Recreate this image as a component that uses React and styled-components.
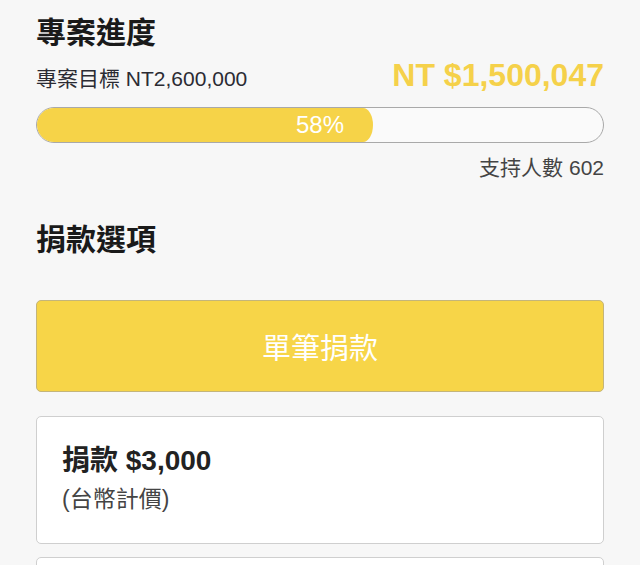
import React from 'react';
import styled, { createGlobalStyle } from 'styled-components';

const GlobalStyle = createGlobalStyle`
    html, body {
        margin: 0;
        padding: 0;
        background: #f7f7f7;
    }
    body {
        font-family: "Liberation Sans", "Noto Sans CJK TC", sans-serif;
        color: #222;
    }
`;

const Page = styled.div`
    padding: 9px 36px 0;
    display: flex;
    flex-direction: column;
`;

const SectionTitle = styled.h2`
    margin: 0;
    font-family: "Noto Sans CJK TC", sans-serif;
    font-size: 30px;
    font-weight: 700;
    line-height: 42px;
    color: #1a1a1a;
`;

const GoalRow = styled.div`
    display: flex;
    justify-content: space-between;
    align-items: baseline;
    margin-top: 6px;
`;

const Goal = styled.span`
    font-size: 21px;
    color: #2b2b33;
    line-height: 28px;
`;

const Raised = styled.span`
    font-size: 32px;
    font-weight: 700;
    color: #f5d14a;
    line-height: 36px;
`;

const Bar = styled.div`
    position: relative;
    margin-top: 14px;
    height: 34px;
    border: 1px solid #a9a9a9;
    border-radius: 18px;
    background: #fafafa;
    overflow: hidden;
`;

const Fill = styled.div`
    height: 100%;
    background: #f6d348;
    border-radius: 0 10px 10px 0 / 0 50% 50% 0;
`;

const Percent = styled.span`
    position: absolute;
    inset: 0;
    display: flex;
    align-items: center;
    justify-content: center;
    color: #fff;
    font-size: 24px;
`;

const Backers = styled.div`
    margin-top: 11px;
    text-align: right;
    font-size: 21px;
    color: #444;
    line-height: 28px;
`;

const OptionsTitle = styled(SectionTitle)`
    margin-top: 34px;
`;

const Options = styled.div`
    margin-top: 42px;
    display: flex;
    flex-direction: column;
    gap: 13px;
`;

const SingleButton = styled.button`
    height: 92px;
    margin-bottom: 11px;
    border: 1px solid #c4b57a;
    border-radius: 5px;
    background: #f7d548;
    color: #fff;
    font-family: "Noto Sans CJK TC", sans-serif;
    font-size: 29px;
    font-weight: 400;
    cursor: pointer;
`;

const Card = styled.div`
    background: #fff;
    border: 1px solid #cfcfcf;
    border-radius: 5px;
    padding: 26px 25px 28px;
    min-height: ${props => props.empty ? '40px' : 'auto'};
`;

const CardTitle = styled.div`
    font-size: 28px;
    font-weight: 700;
    color: #222;
    line-height: 36px;
`;

const CardNote = styled.div`
    margin-top: 4px;
    font-size: 23px;
    color: #444;
    line-height: 32px;
`;

const project = {
    goal: 2600000,
    raised: 1500047,
    backers: 602
};

const format = n => n.toLocaleString('en-US');

export default function App() {
    const percent = Math.round(project.raised / project.goal * 100);
    return (
        <>
            <GlobalStyle />
            <Page>
                <SectionTitle>專案進度</SectionTitle>
                <GoalRow>
                    <Goal>專案目標 NT{format(project.goal)}</Goal>
                    <Raised>NT ${format(project.raised)}</Raised>
                </GoalRow>
                <Bar>
                    <Fill style={{ width: (percent + 1.3) + '%' }} />
                    <Percent>{percent}%</Percent>
                </Bar>
                <Backers>支持人數 {project.backers}</Backers>
                <OptionsTitle>捐款選項</OptionsTitle>
                <Options>
                    <SingleButton>單筆捐款</SingleButton>
                    <Card>
                        <CardTitle>捐款 $3,000</CardTitle>
                        <CardNote>(台幣計價)</CardNote>
                    </Card>
                    <Card empty />
                </Options>
            </Page>
        </>
    );
}
